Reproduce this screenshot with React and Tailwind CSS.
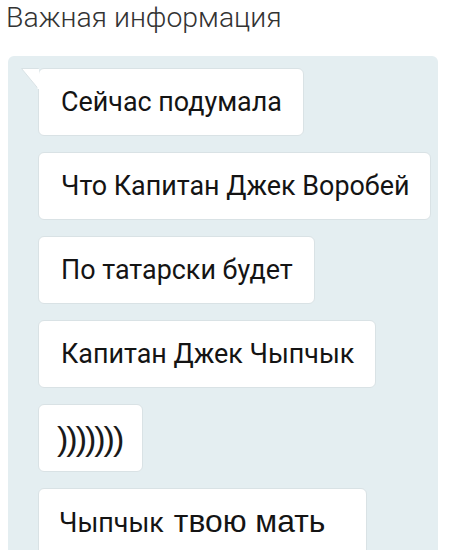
import React from "react";

const Bubble = ({ children, tail, className = "" }) => (
  <div className="relative self-start">
    {tail && (
      <svg className="absolute left-[-17px] top-0" width="18" height="22" viewBox="0 0 18 22">
        <path d="M0.5 0.5 L17.5 0.5 L17.5 21 Z" fill="#ffffff" stroke="#d9e2e5" strokeWidth="1" />
        <rect x="16.5" y="1" width="2" height="20" fill="#ffffff" />
      </svg>
    )}
    <div className={"h-[68px] flex items-center bg-white rounded-[6px] border border-[#d9e2e5] text-[#141414] text-[26.9px] leading-none whitespace-nowrap " + className}>
      <span>{children}</span>
    </div>
  </div>
);

export default function App() {
  return (
    <div className="w-[450px] h-[550px] overflow-hidden bg-white" style={{ fontFamily: "Roboto, 'Noto Sans', sans-serif" }}>
      <div className="pl-[6px] h-[56px] text-[28.4px] font-light text-[#333333] leading-[36px]">
        Важная информация
      </div>
      <div className="ml-[8px] w-[430px] h-[520px] bg-[#e4eef1] rounded-[6px] pl-[30px] pt-[12px] flex flex-col gap-[16px]">
        <Bubble tail className="pl-[22px] pr-[21px]">Сейчас подумала</Bubble>
        <Bubble className="pl-[22px] pr-[21px]">Что Капитан Джек Воробей</Bubble>
        <Bubble className="pl-[22px] pr-[21px]">По татарски будет</Bubble>
        <Bubble className="pl-[22px] pr-[21px]">Капитан Джек Чыпчык</Bubble>
        <Bubble className="w-[105px] pl-[18px]">
          <span className="tracking-[-2px] text-[34px] font-normal text-[#1a1a1a]" style={{ fontFamily: "'Liberation Sans', Arial, sans-serif" }}>)))))))</span>
        </Bubble>
        <Bubble className="w-[329px] pl-[20px]">
          Чыпчык
          <span className="ml-[10px] text-[31.8px]" style={{ fontFamily: "'Liberation Sans', Arial, sans-serif" }}>твою мать</span>
        </Bubble>
      </div>
    </div>
  );
}
